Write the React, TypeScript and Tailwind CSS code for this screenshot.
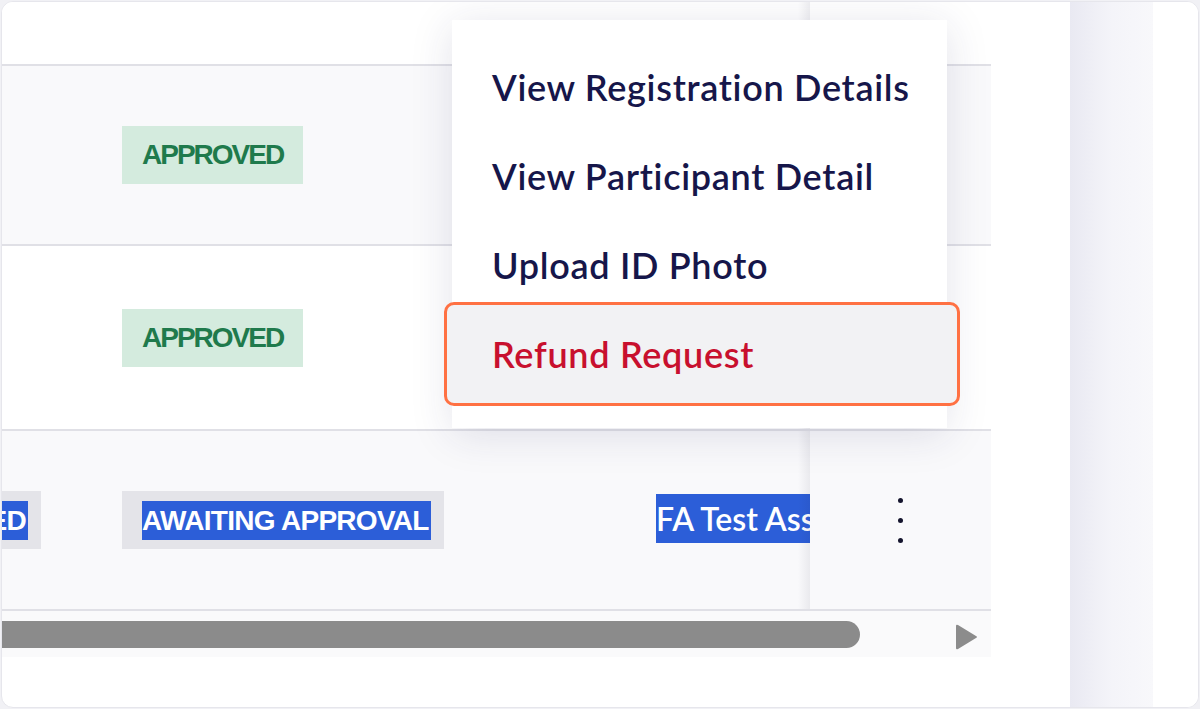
import React from "react";

const lato = { fontFamily: "Lato, 'Open Sans', sans-serif" };
const arial = { fontFamily: "'Liberation Sans', Arial, sans-serif" };

function StickyCell({ h, bg, children }: { h: string; bg: string; children?: React.ReactNode }) {
  return (
    <div className={`relative w-[181px] shrink-0 flex items-center justify-center ${h} ${bg}`}>
      <div className="absolute top-0 bottom-0 -left-[12px] w-[12px] bg-gradient-to-l from-[rgba(30,30,60,0.07)] to-transparent" />
      {children}
    </div>
  );
}

function Line() {
  return <div className="h-[2px] w-full bg-[#e0e0e6]" />;
}

function Approved() {
  return (
    <div
      className="h-[58px] px-[20px] flex items-center bg-[#d4ebde] text-[#1f7a4c] text-[28px] font-bold tracking-[-2px]"
      style={arial}
    >
      APPROVED
    </div>
  );
}

function Kebab() {
  return (
    <div className="flex flex-col items-center gap-[15px]">
      <div className="w-[5px] h-[5px] rounded-full bg-[#15152e]" />
      <div className="w-[5px] h-[5px] rounded-full bg-[#15152e]" />
      <div className="w-[5px] h-[5px] rounded-full bg-[#15152e]" />
    </div>
  );
}

const item = "h-[89px] flex items-center pl-[40px] text-[36px] font-semibold tracking-[0.7px] whitespace-nowrap";

export default function App() {
  return (
    <div className="w-[1200px] h-[709px] bg-[#f1f1f5] p-[1px]">
      <div className="relative flex h-full rounded-[12px] border border-[#e6e6ec] bg-white overflow-hidden">
        {/* table region */}
        <div className="w-[989px] shrink-0 flex flex-col">
          {/* header */}
          <div className="flex h-[62px] bg-white">
            <div className="w-[808px] shrink-0" />
            <StickyCell h="h-[62px]" bg="bg-white" />
          </div>
          <Line />
          {/* row 1 */}
          <div className="flex h-[178px] bg-[#f9f9fb]">
            <div className="w-[808px] shrink-0 flex items-center overflow-hidden">
              <div className="w-[39px] shrink-0" />
              <div className="pl-[81px] w-[535px] shrink-0 flex">
                <Approved />
              </div>
            </div>
            <StickyCell h="h-[178px]" bg="bg-[#f9f9fb]" />
          </div>
          <Line />
          {/* row 2 */}
          <div className="flex h-[183px] bg-white">
            <div className="w-[808px] shrink-0 flex items-center overflow-hidden">
              <div className="w-[39px] shrink-0" />
              <div className="pl-[81px] w-[535px] shrink-0 flex">
                <Approved />
              </div>
            </div>
            <StickyCell h="h-[183px]" bg="bg-white" />
          </div>
          <Line />
          {/* row 3 */}
          <div className="flex h-[178px] bg-[#f9f9fb]">
            <div className="w-[808px] shrink-0 flex items-center overflow-hidden">
              <div className="w-[39px] shrink-0 flex justify-end overflow-hidden">
                <div
                  className="shrink-0 h-[58px] pl-[20px] pr-[13px] flex items-center bg-[#e4e4e9] text-[28px] font-bold tracking-[-0.7px]"
                  style={arial}
                >
                  <span className="bg-[#2c5ed8] text-white leading-[39px] pr-[2px]">REGISTERED</span>
                </div>
              </div>
              <div className="pl-[81px] w-[535px] shrink-0 flex">
                <div
                  className="h-[58px] pl-[20px] pr-[13px] flex items-center bg-[#e4e4e9] text-[28px] font-bold tracking-[-0.7px] whitespace-nowrap"
                  style={arial}
                >
                  <span className="bg-[#2c5ed8] text-white leading-[39px] pr-[2px]">AWAITING APPROVAL</span>
                </div>
              </div>
              <div className="pl-[80px] shrink-0 flex mb-[3px]">
                <span
                  className="bg-[#2c5ed8] text-white text-[32px] font-semibold leading-[49px] whitespace-nowrap"
                  style={lato}
                >
                  FA Test Association
                </span>
              </div>
            </div>
            <StickyCell h="h-[178px]" bg="bg-[#f9f9fb]">
              <Kebab />
            </StickyCell>
          </div>
          <Line />
          {/* scrollbar */}
          <div className="h-[46px] bg-[#fafafb] flex items-start">
            <div className="-ml-[20px] mt-[10px] w-[878px] h-[27px] rounded-full bg-[#8b8b8b] shrink-0" />
            <div className="ml-[95px] mt-[11px] shrink-0">
              <svg width="24" height="30" viewBox="0 0 24 30">
                <path d="M3 3 L21 14 Q23 15 21 16 L3 27 Q1 28 1 26 L1 4 Q1 2 3 3 Z" fill="#8c8c8c" />
              </svg>
            </div>
          </div>
        </div>
        {/* right area */}
        <div className="w-[79px] shrink-0 bg-white" />
        <div className="w-[83px] shrink-0 bg-gradient-to-r from-[#e9e9f2] via-[#f4f4f9] to-[#f8f8fb]" />
        <div className="flex-1 bg-white" />

        {/* dropdown menu */}
        <div
          className="absolute left-[450px] top-[18px] w-[495px] h-[408px] bg-white pt-[22px] shadow-[0_6px_40px_rgba(40,40,90,0.13)]"
          style={lato}
        >
          <div className={`${item} text-[#16164a]`}>View Registration Details</div>
          <div className={`${item} text-[#16164a]`}>View Participant Detail</div>
          <div className={`${item} text-[#16164a]`}>Upload ID Photo</div>
          <div className={`${item} relative z-[2] text-[#c8102e]`}>Refund Request</div>
        </div>
        {/* annotation highlight */}
        <div className="absolute z-[1] left-[442px] top-[300px] w-[516px] h-[104px] rounded-[10px] border-[3px] border-[#ff7143] bg-[#f2f2f4]" />
      </div>
    </div>
  );
}
